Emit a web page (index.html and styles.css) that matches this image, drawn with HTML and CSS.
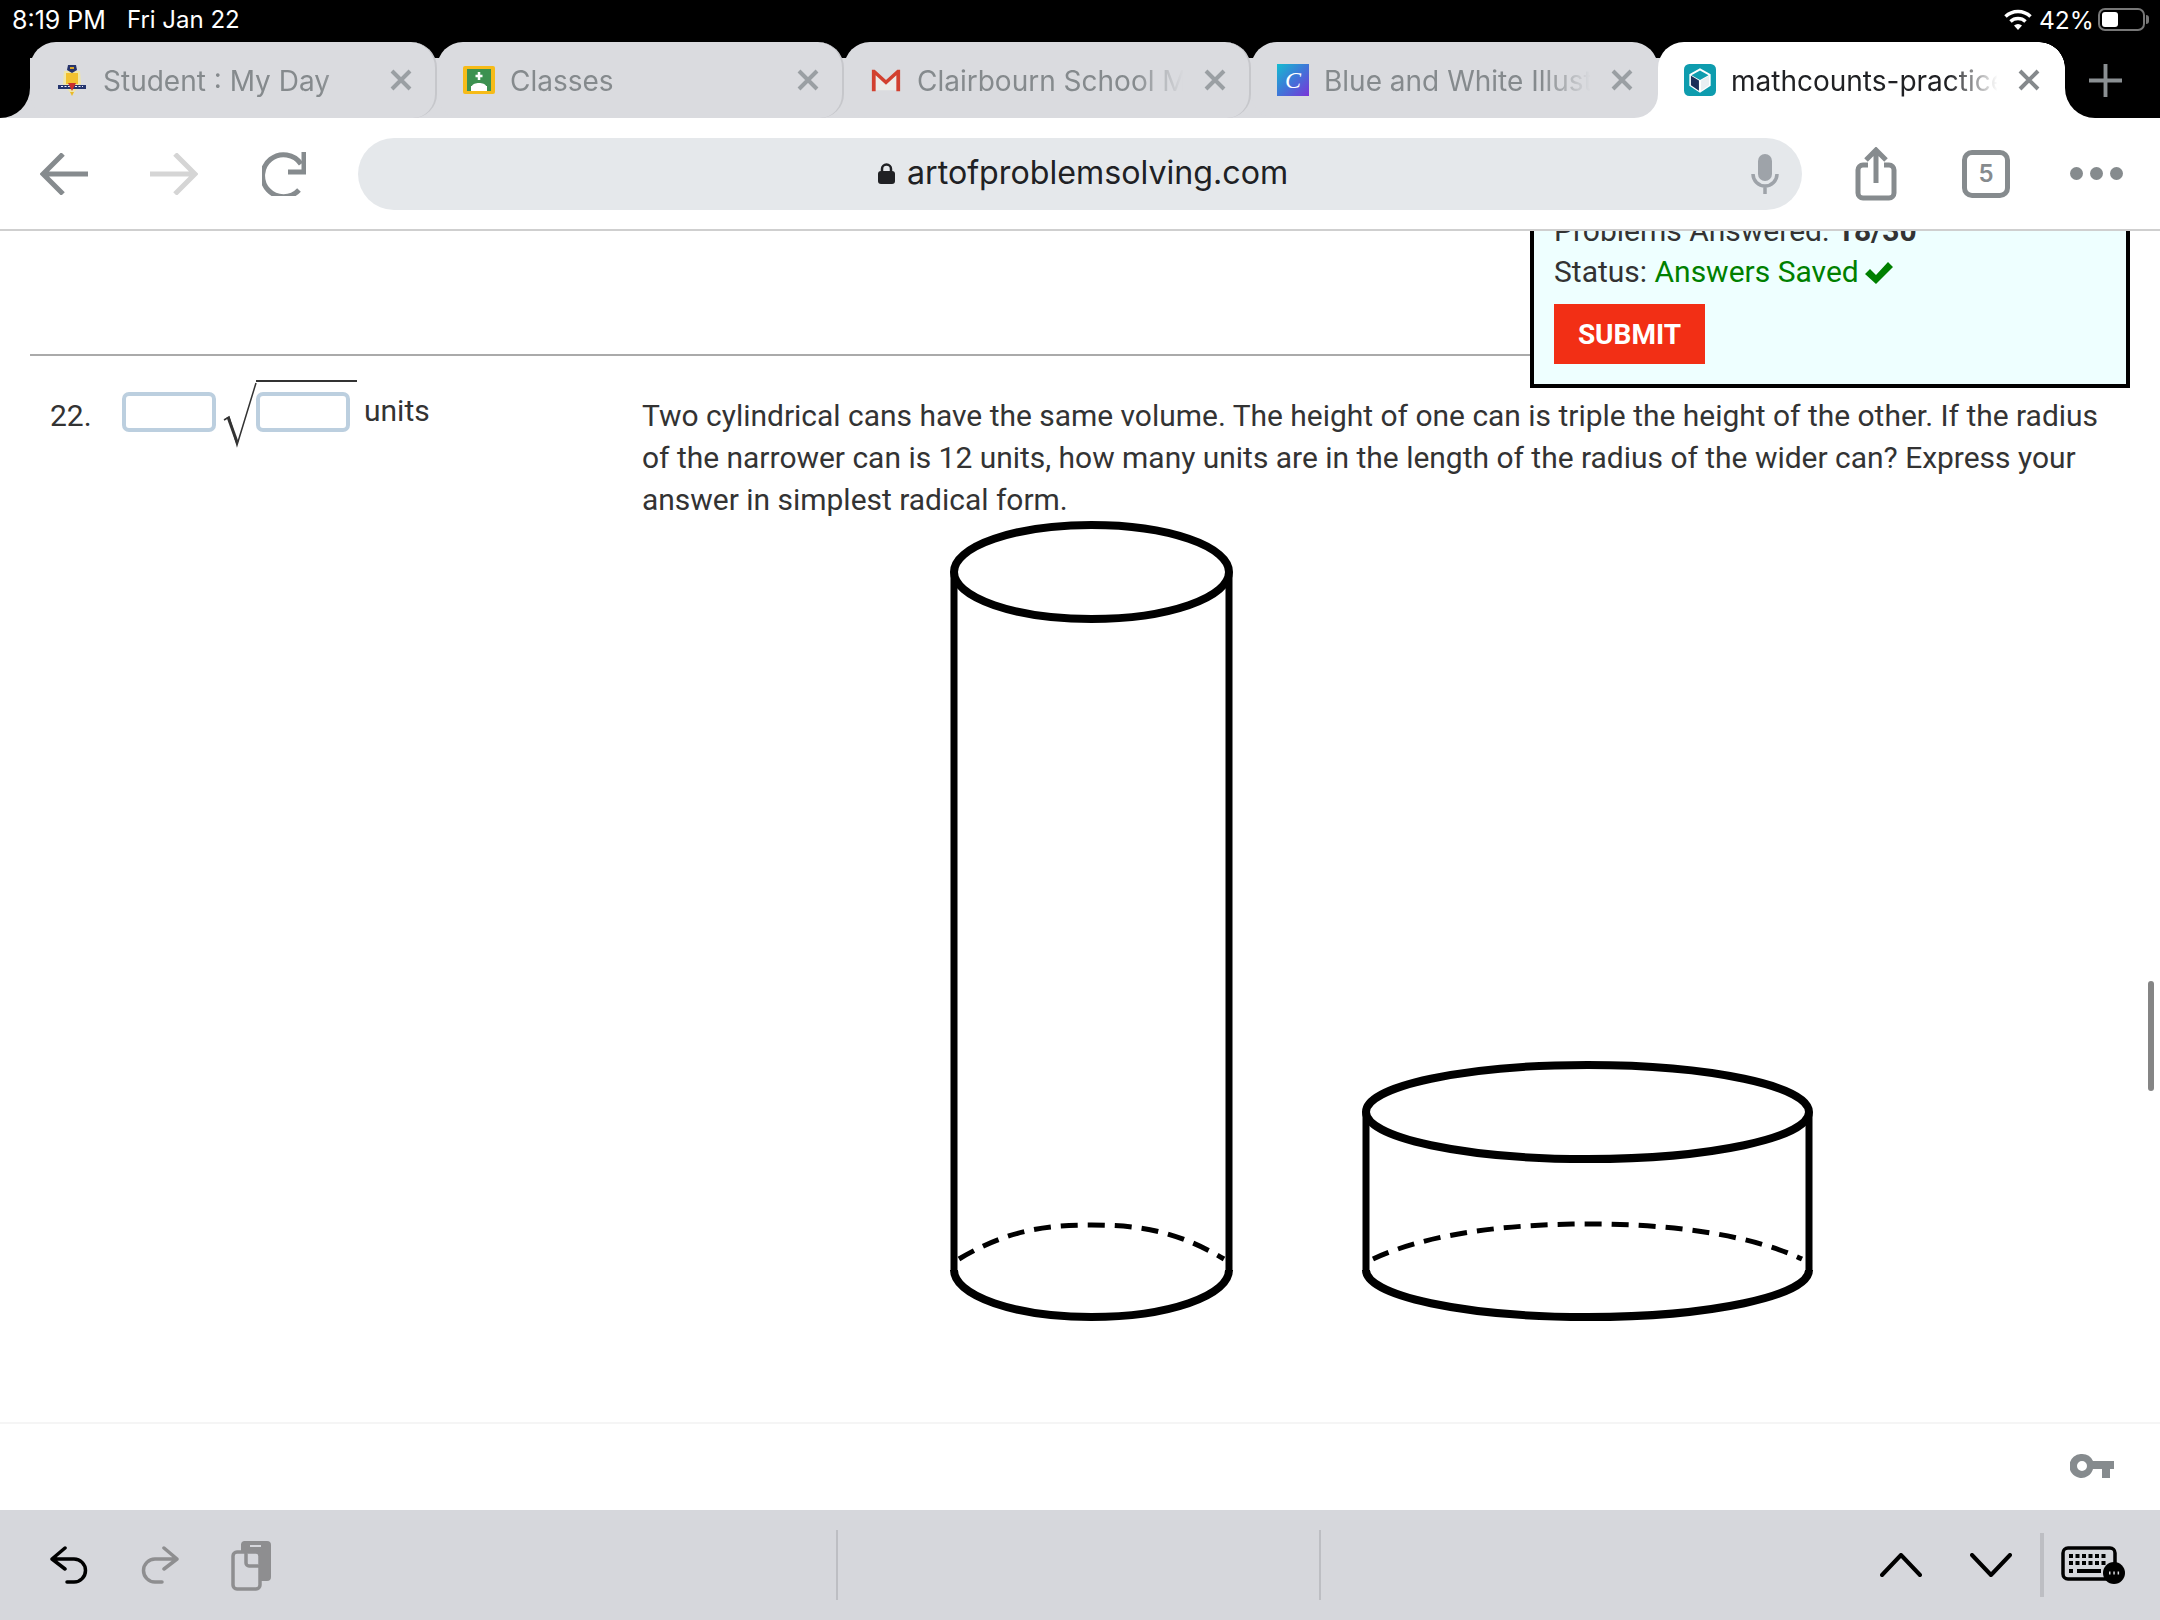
FILE: index.html
```html
<!DOCTYPE html>
<html lang="en">
<head>
<meta charset="utf-8">
<title>artofproblemsolving.com</title>
<link rel="stylesheet" href="styles.css">
</head>
<body>
<div class="screen">
  <header class="status">
    <span class="clock">8:19 PM</span>
    <span class="date">Fri Jan 22</span>
    <span class="status-right">
      <svg class="wifi" viewBox="0 0 28 24"><path d="M1.5 8.5a18 18 0 0 1 25 0" class="wifi-arc"/><path d="M6.5 13.5a11 11 0 0 1 15 0" class="wifi-arc"/><path d="M14 22l-4-4.500a6 6 0 0 1 8 0z" class="wifi-dot"/></svg>
      <span class="batt-text">42%</span>
      <span class="battery"><span class="battery-fill"></span></span>
      <span class="battery-nub"></span>
    </span>
  </header>

  <nav class="tabs">
    <div class="tab-lead"></div>
    <div class="tab tab-line">
      <svg class="fav" viewBox="0 0 28 32"><path d="M6 7h16l1 13-9 11-9-11z" fill="#efe6a8"/><rect x="8" y="9" width="12" height="11" fill="#f2c230"/><path d="M10 1h8l1 5-5 3-5-3z" fill="#27346b"/><rect x="12" y="3" width="4" height="2" fill="#d9a52a"/><path d="M0 21h28v4H0z" fill="#24356e"/><path d="M3 22.500h22" stroke="#eef" stroke-width="1" stroke-dasharray="2 1.500"/><path d="M10 19h8l-4 8z" fill="#c9302c"/><path d="M12 28h4l-2 4z" fill="#e9b92a"/></svg>
      <span class="tab-title">Student : My Day</span>
      <svg class="close" viewBox="0 0 22 22"><path d="M2 2l18 18M20 2L2 20"/></svg>
    </div>
    <div class="tab tab-line">
      <svg class="fav" viewBox="0 0 32 28"><rect width="32" height="28" rx="2" fill="#f6bb18"/><rect x="4" y="3" width="24" height="22" fill="#3c9150"/><rect x="8" y="20" width="16" height="5" fill="#fff"/><path d="M9 20c1-4 13-4 14 0z" fill="#fff"/><path d="M16 6v8M12.500 10h7" stroke="#fff" stroke-width="2.500"/></svg>
      <span class="tab-title">Classes</span>
      <svg class="close" viewBox="0 0 22 22"><path d="M2 2l18 18M20 2L2 20"/></svg>
    </div>
    <div class="tab tab-line">
      <svg class="fav" viewBox="-2 -5 34 34"><path d="M3 3l12 10L27 3v20H3z" fill="#ecebe8"/><path d="M0 1h3l12 11L27 1h3v23h-4V7L15 17 4 7v17H0z" fill="#d2402f"/></svg>
      <span class="tab-title">Clairbourn School Mail</span>
      <svg class="close" viewBox="0 0 22 22"><path d="M2 2l18 18M20 2L2 20"/></svg>
    </div>
    <div class="tab tab-line">
      <svg class="fav" viewBox="0 0 32 32"><defs><linearGradient id="canva" x1="0" y1="0" x2="1" y2="1"><stop offset="0" stop-color="#14bcd0"/><stop offset="0.5" stop-color="#3f76d8"/><stop offset="1" stop-color="#7a34d8"/></linearGradient></defs><rect width="32" height="32" fill="url(#canva)"/><text x="16" y="24" class="canva-c">C</text></svg>
      <span class="tab-title">Blue and White Illustrated</span>
      <svg class="close" viewBox="0 0 22 22"><path d="M2 2l18 18M20 2L2 20"/></svg>
    </div>
    <div class="tab tab-active">
      <svg class="fav" viewBox="0 0 30 30"><rect width="30" height="30" rx="5" fill="#0e9cae"/><path d="M15 4l10 5.500v11L15 27 5 20.500v-11z" fill="#fff"/><path d="M6.500 11l7.500 4.500V25l-7.500-5z" fill="#1b2d58"/><path d="M23.500 11L16 15.500V25l7.500-5z" fill="#e8eef2"/><path d="M15 6l8 4.500-8 4.500-8-4.500z" fill="#0e9cae"/></svg>
      <span class="tab-title">mathcounts-practice-test</span>
      <svg class="close" viewBox="0 0 22 22"><path d="M2 2l18 18M20 2L2 20"/></svg>
    </div>
    <div class="tab-trail">
      <svg class="plus" viewBox="0 0 34 34"><path d="M17 0v34M0 17h34"/></svg>
    </div>
  </nav>

  <div class="toolbar">
    <svg class="nav-arrow" viewBox="0 0 48 42"><path d="M23 1L3 21l20 20M3 21h45"/></svg>
    <svg class="nav-arrow nav-forward" viewBox="0 0 48 42"><path d="M25 1l20 20-20 20M45 21H0"/></svg>
    <svg class="reload" viewBox="0 0 44 44"><path d="M39 12A21 21 0 1 0 37 38"/><path d="M42 0V20H26"/></svg>
    <div class="url-pill">
      <div class="url-center">
        <svg class="lock" viewBox="0 0 17 21"><path d="M4 9V6a4.500 4.500 0 0 1 9 0v3" class="lock-bow"/><rect y="8" width="17" height="13" rx="3" class="lock-body"/></svg>
        <span class="url">artofproblemsolving.com</span>
      </div>
      <svg class="mic" viewBox="0 0 28 40"><rect x="7" y="0" width="14" height="27" rx="7" class="mic-fill"/><path d="M2 20a12 12 0 0 0 24 0M14 32v8" class="mic-line"/></svg>
    </div>
    <svg class="share" viewBox="0 0 42 54"><path d="M13 18H8a5 5 0 0 0-5 5v23a5 5 0 0 0 5 5h26a5 5 0 0 0 5-5V23a5 5 0 0 0-5-5h-5"/><path d="M21 36V4M11 13l10-10 10 10"/></svg>
    <div class="tab-count">5</div>
    <div class="dots"><i></i><i></i><i></i></div>
  </div>

  <main class="page">
    <div class="problem-area">
      <div class="rule"></div>
      <div class="problem">
        <div class="answer">
          <span class="number">22.</span>
          <span class="input input-first"></span>
          <svg class="radical" viewBox="0 0 34 68"><path d="M1 39l5-3 8 28L33 2" class="radical-line"/><path d="M5 36l9 25" class="radical-heavy"/></svg>
          <span class="radicand"><span class="input"></span></span>
          <span class="units">units</span>
        </div>
        <div class="question">
          <p class="question-text">Two cylindrical cans have the same volume. The height of one can is triple the height of the other. If the radius of the narrower can is 12 units, how many units are in the length of the radius of the wider can? Express your answer in simplest radical form.</p>
          <svg class="figure" viewBox="0 0 864 804">
            <ellipse cx="142.500" cy="51" rx="137.500" ry="47" class="can-top"/>
            <path d="M5 51V749M280 51V749" class="can-side"/>
            <path d="M5 749A137.500 47 0 0 0 280 749" class="can-top"/>
            <path d="M10 738C60 708 100 704 142.500 704C185 704 225 708 275 738" class="can-dash"/>
            <ellipse cx="638.500" cy="591" rx="221.500" ry="47" class="can-top"/>
            <path d="M417 591V749M860 591V749" class="can-side"/>
            <path d="M417 749A221.500 47 0 0 0 860 749" class="can-top"/>
            <path d="M424 738C480 712 560 703 638.500 703C717 703 797 712 853 738" class="can-dash"/>
          </svg>
        </div>
      </div>
    </div>
    <footer class="page-footer">
      <svg class="key" viewBox="0 0 44 24"><path fill-rule="evenodd" d="M12 0a12 12 0 0 1 11 7h21v8h-4v9h-8v-9h-9a12 12 0 1 1-11-15zm0 7a5 5 0 1 0 0 10 5 5 0 0 0 0-10z"/></svg>
    </footer>
    <aside class="score">
      <div class="score-line">Problems Answered: <b>18/30</b></div>
      <div class="score-line">Status: <span class="saved">Answers Saved</span> <svg class="check" viewBox="0 0 28 22"><path d="M0 12l5-5 6 6L23 0l5 5-17 17z"/></svg></div>
      <button class="submit">SUBMIT</button>
    </aside>
    <div class="scrollbar"></div>
  </main>

  <footer class="kbd-bar">
    <svg class="kbd-icon undo" viewBox="0 0 38 38"><path d="M15 2L2 13l13 10M2 13h22a11 11 0 0 1 0 23h-7"/></svg>
    <svg class="kbd-icon redo" viewBox="0 0 38 38"><path d="M23 2l13 11-13 10M36 13H14a11 11 0 0 0 0 23h7"/></svg>
    <svg class="paste" viewBox="0 0 40 50"><path d="M13 0h23a4 4 0 0 1 4 4v32a4 4 0 0 1-4 4h-7V24L15 10H10V4a4 4 0 0 1 3-4z" class="paste-fill"/><rect x="2" y="11" width="27" height="37" rx="4" class="paste-line"/><path d="M15 11v11a3 3 0 0 0 3 3h11" class="paste-line"/><rect x="19" y="4" width="11" height="2" fill="#d6d7dc"/></svg>
    <span class="kbd-div kbd-div-a"></span>
    <span class="kbd-div kbd-div-b"></span>
    <svg class="chevron chevron-up" viewBox="0 0 42 24"><path d="M2 22L21 2l19 20"/></svg>
    <svg class="chevron chevron-down" viewBox="0 0 42 24"><path d="M2 2l19 20L40 2"/></svg>
    <span class="kbd-div kbd-div-c"></span>
    <svg class="keyboard" viewBox="0 0 66 38"><rect x="2" y="2" width="52" height="31" rx="5" class="kb-frame"/><path d="M8 10h38M8 17h38" class="kb-keys"/><path d="M8 25h4M16 25h24M44 25h2" class="kb-bar"/><circle cx="53" cy="27" r="11" class="kb-bubble"/><path d="M48 27h1.500M52.300 27h1.500M56.600 27h1.500" class="kb-more"/></svg>
  </footer>
</div>
</body>
</html>
```
FILE: styles.css
```css
* { box-sizing: border-box; }
html, body { margin: 0; padding: 0; }
body { width: 2160px; height: 1620px; overflow: hidden; background: #fff; font-family: Roboto, "Liberation Sans", sans-serif; color: #333; }
.screen { width: 2160px; height: 1620px; display: flex; flex-direction: column; }

/* status bar */
.status { height: 42px; background: #000; color: #fff; display: flex; align-items: center; padding: 0 11px 3px 12px; font-family: Inter, Roboto, sans-serif; font-size: 25px; flex: none; }
.date { margin-left: 21px; font-size: 24px; }
.status-right { margin-left: auto; display: flex; align-items: center; }
.wifi { width: 28px; height: 24px; }
.wifi-arc { fill: none; stroke: #fff; stroke-width: 3.5; }
.wifi-dot { fill: #fff; }
.batt-text { margin-left: 7px; width: 59px; font-size: 24.500px; }
.battery { width: 47px; height: 23px; border: 2px solid #777; border-radius: 7px; padding: 2px; display: block; }
.battery-fill { display: block; width: 16px; height: 100%; background: #fff; border-radius: 3px; }
.battery-nub { width: 3px; height: 9px; background: #777; border-radius: 0 3px 3px 0; margin-left: 1px; }

/* tabs */
.tabs { height: 76px; flex: none; display: flex; background: linear-gradient(#000 0 16px, #dadbdf 16px); }
.tab-lead { width: 30px; background: #dadbdf; flex: none; position: relative; }
.tab-lead::before { content: ""; display: block; width: 100%; height: 100%; background: #000; border-bottom-right-radius: 30px; }
.tab { width: 407px; flex: none; display: flex; align-items: center; background: #dadbdf; border-radius: 26px 26px 24px 24px; padding-left: 26px; position: relative; z-index: 1; }
.tab-line { border-right: 2px solid #c6c7cb; }
.tab-line:nth-child(5) { border-right: 0; }
.tab-active { background: #fff; z-index: auto; border-radius: 26px 26px 0 0; }
.tab-active::before { content: ""; position: absolute; left: -30px; bottom: 0; width: 60px; height: 40px; background: #fff; z-index: 0; }
.tab-active::after { content: ""; position: absolute; right: 0; top: 0; width: 26px; height: 26px; background: radial-gradient(circle at 0 100%, transparent 25.500px, #000 26px); }
.tab-active > * { position: relative; z-index: 2; }
.fav { width: 32px; height: 32px; flex: none; }
.tab-title { width: 272px; margin-left: 15px; padding-top: 2px; white-space: nowrap; overflow: hidden; font-family: Inter, Roboto, sans-serif; font-size: 28px; color: #858a8d; -webkit-mask-image: linear-gradient(to right, #000 80%, transparent 98%); mask-image: linear-gradient(to right, #000 80%, transparent 98%); }
.tab-active .tab-title { color: #202124; }
.close { width: 22px; height: 22px; margin-left: 15px; flex: none; fill: none; stroke: #9a9fa3; stroke-width: 4; }
.tab-active .close { stroke: #85898c; }
.tab-trail { flex: 1; background: #fff; position: relative; }
.tab-trail::before { content: ""; position: absolute; inset: 0; background: #000; border-bottom-left-radius: 30px; }
.plus { position: absolute; left: 24px; top: 22px; width: 33px; height: 33px; fill: none; stroke: #8b9093; stroke-width: 4; }

/* toolbar */
.toolbar { height: 113px; flex: none; background: #fff; border-bottom: 2px solid #cfcfcf; display: flex; align-items: center; padding-left: 40px; position: relative; z-index: 3; }
.nav-arrow { width: 48px; height: 42px; fill: none; stroke: #868b8e; stroke-width: 5; flex: none; }
.nav-forward { stroke: #d5d5d5; margin-left: 62px; }
.reload { width: 44px; height: 44px; margin-left: 64px; fill: none; stroke: #868b8e; stroke-width: 5; flex: none; }
.url-pill { width: 1444px; height: 72px; margin-left: 52px; background: #e5e8eb; border-radius: 36px; display: flex; align-items: center; position: relative; flex: none; }
.url-center { margin-left: 520px; display: flex; align-items: center; }
.lock { width: 17px; height: 21px; }
.lock-bow { fill: none; stroke: #202124; stroke-width: 2.5; }
.lock-body { fill: #202124; }
.url { margin-left: 12px; margin-top: -2px; font-family: Inter, Roboto, sans-serif; font-size: 32.200px; color: #202124; }
.mic { width: 28px; height: 40px; position: absolute; right: 23px; top: 16px; }
.mic-fill { fill: #9ea3a9; }
.mic-line { fill: none; stroke: #9ea3a9; stroke-width: 3.5; }
.share { width: 42px; height: 54px; margin-left: 53px; fill: none; stroke: #868b8e; stroke-width: 5; flex: none; }
.tab-count { width: 48px; height: 48px; margin-left: 65px; border: 5px solid #868b8e; border-radius: 10px; display: flex; align-items: center; justify-content: center; font-family: Inter, Roboto, sans-serif; font-weight: 600; font-size: 24px; color: #868b8e; flex: none; }
.dots { display: flex; gap: 7px; margin-left: 60px; flex: none; }
.dots i { width: 13px; height: 13px; border-radius: 50%; background: #868b8e; display: block; }

/* page */
.page { flex: 1; min-height: 0; position: relative; overflow: hidden; display: flex; flex-direction: column; background: #fff; }
.problem-area { flex: 1; min-height: 0; overflow: hidden; padding-top: 123px; }
.rule { height: 2px; margin: 0 100px 0 30px; background: #aaa; }
.problem { display: flex; padding-top: 39px; }
.answer { width: 642px; flex: none; display: flex; align-items: flex-start; padding-left: 50px; font-size: 30px; line-height: 42px; height: 80px; }
.number { width: 72px; position: relative; top: -4px; margin-top: 4px; }
.input { display: block; width: 94px; height: 40px; border: 4px solid #bccfdf; border-radius: 7px; background: #fff; }
.input-first { margin-top: -3px; }
.radical { width: 34px; height: 68px; margin: -14px 0 0 7px; flex: none; }
.radical-line { fill: none; stroke: #333; stroke-width: 1.5; }
.radical-heavy { fill: none; stroke: #333; stroke-width: 3; }
.radicand { display: block; width: 101px; border-top: 2px solid #333; margin-top: -15px; padding-top: 10px; margin-left: -1px; }
.units { margin-left: 7px; margin-top: -5px; }
.question { width: 1478px; flex: none; }
.question-text { margin: 0; font-size: 29.960px; line-height: 42px; color: #333; }
.figure { display: block; width: 864px; height: 804px; margin: 0 auto; }
.can-top { fill: none; stroke: #000; stroke-width: 8; }
.can-side { fill: none; stroke: #000; stroke-width: 7; }
.can-dash { fill: none; stroke: #000; stroke-width: 5; stroke-dasharray: 17 10; }
.page-footer { height: 88px; flex: none; border-top: 2px solid #f5f5f5; display: flex; justify-content: flex-end; padding: 30px 46px 0 0; }
.key { width: 44px; height: 24px; fill: #868b8e; }
.score { position: absolute; left: 1530px; top: -21px; width: 600px; background: #eeffff; border: 4px solid #000; border-top: 0; padding: 0 0 20px 20px; font-size: 30px; line-height: 41px; color: #333; }
.score-line { white-space: nowrap; }
.saved { color: #008000; }
.check { width: 28px; height: 22px; fill: #008000; vertical-align: -2px; margin-left: -1px; }
.submit { display: block; width: 151px; height: 60px; margin-top: 12px; border: 0; padding: 0; background: #f22f15; color: #fff; font-family: Roboto, sans-serif; font-weight: 700; font-size: 28px; }
.scrollbar { position: absolute; left: 2148px; top: 750px; width: 6px; height: 110px; border-radius: 3px; background: #858585; }

/* keyboard bar */
.kbd-bar { height: 110px; flex: none; background: #d6d7dc; display: flex; align-items: center; padding-left: 50px; position: relative; }
.kbd-icon { width: 38px; height: 38px; fill: none; stroke-width: 3.5; stroke-linecap: round; stroke-linejoin: round; flex: none; }
.undo { stroke: #000; }
.redo { stroke: #8e8e90; margin-left: 53px; }
.paste { width: 40px; height: 50px; margin-left: 52px; flex: none; margin-top: 2px; }
.paste-fill { fill: #8e8e90; }
.paste-line { fill: #d6d7dc; stroke: #8e8e90; stroke-width: 3.5; }
.kbd-div { width: 2px; height: 70px; background: #bdbec3; flex: none; }
.kbd-div-a { margin-left: 565px; }
.kbd-div-b { margin-left: 481px; }
.chevron { width: 42px; height: 24px; fill: none; stroke: #000; stroke-width: 4; stroke-linecap: round; stroke-linejoin: round; flex: none; }
.chevron-up { margin-left: 559px; }
.chevron-down { margin-left: 48px; }
.kbd-div-c { width: 4px; height: 64px; margin-left: 28px; }
.keyboard { width: 66px; height: 38px; margin-left: 17px; flex: none; }
.kb-frame { fill: none; stroke: #000; stroke-width: 3.5; }
.kb-keys { stroke: #000; stroke-width: 4; stroke-dasharray: 4 2.500; fill: none; }
.kb-bar { stroke: #000; stroke-width: 4; fill: none; }
.kb-bubble { fill: #000; }
.kb-more { stroke: #d6d7dc; stroke-width: 3; fill: none; }
.canva-c { font-family: "Liberation Serif", serif; font-style: italic; font-size: 24px; fill: #fff; text-anchor: middle; }
```
